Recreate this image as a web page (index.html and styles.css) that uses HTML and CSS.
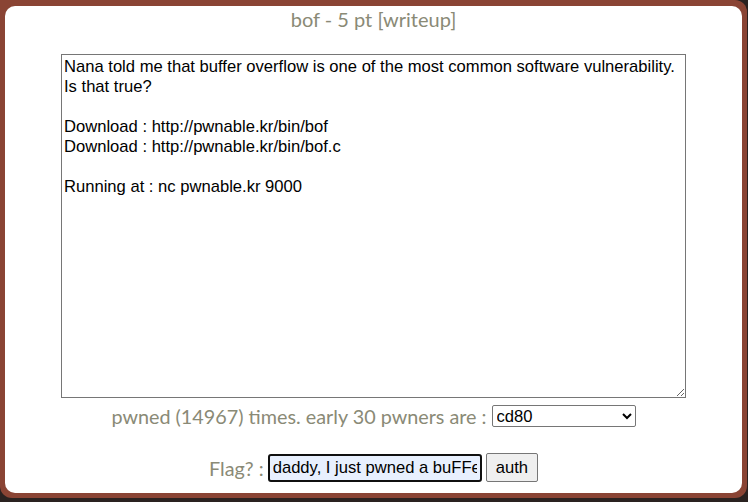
FILE: index.html
```html
<!DOCTYPE html>
<html lang="en">
<head>
  <meta charset="UTF-8">
  <title>bof - 5 pt</title>
  <link rel="stylesheet" href="styles.css">
</head>
<body>
  <div class="frame">
    <div class="panel">
      <h1 class="title">bof - 5 pt [writeup]</h1>
      <textarea class="desc" spellcheck="false">Nana told me that buffer overflow is one of the most common software vulnerability. 
Is that true?

Download : http://pwnable.kr/bin/bof
Download : http://pwnable.kr/bin/bof.c

Running at : nc pwnable.kr 9000
</textarea>
      <div class="row pwners">
        <span>pwned (14967) times. early 30 pwners are :</span>
        <select class="pwner-list">
          <option>cd80</option>
          <option>daehee</option>
        </select>
      </div>
      <form class="row flag" onsubmit="return false;">
        <span>Flag? :</span>
        <input class="flag-input" type="text" value="daddy, I just pwned a buFFer :)">
        <button class="auth" type="submit">auth</button>
      </form>
    </div>
  </div>
</body>
</html>
```

FILE: styles.css
```css
body {
  margin: 0;
  background-color: #2a2220;
  font-family: 'Lato', sans-serif;
}
.frame {
  width: 737px;
  height: 487px;
  padding: 6px 5px 5px 5px;
  background-color: #8a4434;
  border-radius: 0 12px 12px 12px;
}
.panel {
  height: 100%;
  background-color: #fff;
  border-radius: 10px;
  display: flex;
  flex-direction: column;
  align-items: center;
}
.title {
  margin: 0;
  font-size: 20px;
  font-weight: normal;
  line-height: 26px;
  color: #8a8a76;
}
.desc {
  box-sizing: border-box;
  width: 625px;
  height: 344px;
  margin-top: 22px;
  padding: 2px;
  border: 1px solid #767676;
  font-family: 'Liberation Sans', Arial, sans-serif;
  font-size: 16.6px;
  line-height: 20px;
  color: #000;
  resize: both;
}
.row {
  display: flex;
  align-items: center;
  gap: 4px;
  color: #8a8a76;
  font-size: 19.8px;
}
.pwners {
  margin-top: 6px;
  gap: 5px;
}
.pwner-list {
  width: 144px;
  height: 22px;
  font-family: 'Liberation Sans', Arial, sans-serif;
  font-size: 16.6px;
  border: 1px solid #767676;
  border-radius: 2px;
  background: #fff;
  color: #000;
}
.flag {
  margin: 25px 0 0 0;
}
.flag-input {
  box-sizing: border-box;
  width: 214px;
  height: 28px;
  padding: 1px 3px;
  border: 2px solid #101010;
  border-radius: 3px;
  background-color: #e8f0fe;
  font-family: 'Liberation Sans', Arial, sans-serif;
  font-size: 16.6px;
  color: #000;
  outline: none;
}
.auth {
  height: 29px;
  padding: 1px 9px;
  font-family: 'Liberation Sans', Arial, sans-serif;
  font-size: 16.6px;
  color: #000;
  background-color: #efefef;
  border: 1px solid #767676;
  border-radius: 2px;
}
```
